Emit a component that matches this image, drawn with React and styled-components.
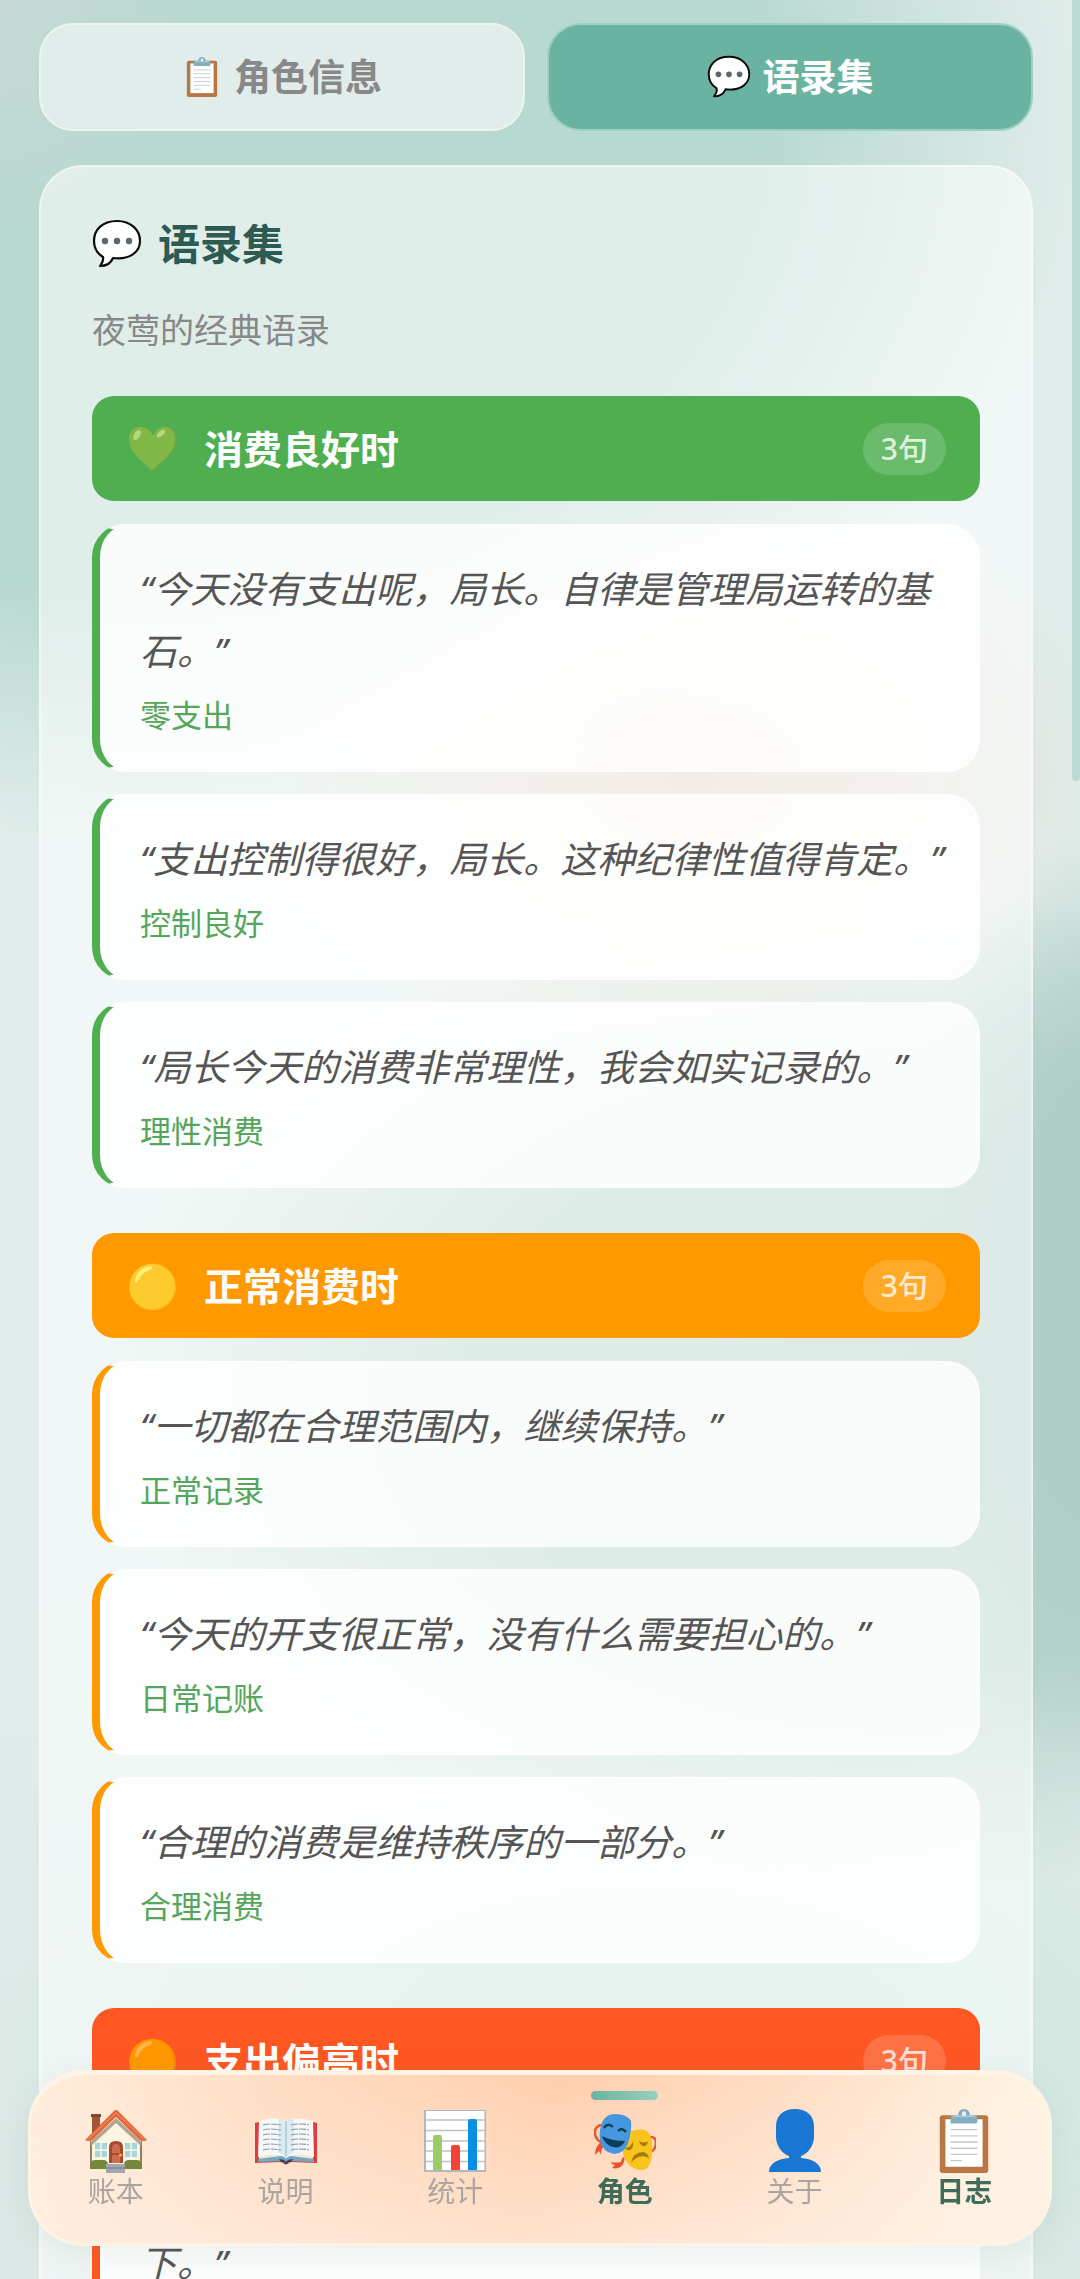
import React from 'react';
import styled, { createGlobalStyle } from 'styled-components';

const GlobalStyle = createGlobalStyle`
  * {
    box-sizing: border-box;
  }

  body {
    margin: 0;
    font-family: "Noto Sans", "Noto Sans CJK SC", sans-serif;
    text-spacing-trim: space-all;
    background-color: #e0edea;
  }
`;

const Page = styled.div`
  display: flex;
  height: 100vh;
  overflow: hidden;
  background:
    radial-gradient(ellipse 22% 21% at 104% 57%, #abccc5 0%, #b0cfc8 50%, rgba(176, 207, 200, 0) 100%),
    radial-gradient(ellipse 40% 13% at 64% 34%, #e6d6c8 0%, rgba(230, 214, 200, 0) 100%),
    radial-gradient(ellipse 18% 10% at 0% 0%, #c6dad5 0%, rgba(198, 218, 213, 0) 100%),
    radial-gradient(ellipse 86% 32% at 14% 5%, #b8d9d0 0%, #b8d9d0 66%, rgba(184, 217, 208, 0) 100%),
    radial-gradient(ellipse 74% 22% at 84% 61%, #b0d2c8 0%, #b5d4cb 55%, rgba(184, 214, 205, 0) 100%),
    radial-gradient(ellipse 60% 14% at 60% 90%, #c4e6d8 0%, rgba(196, 230, 216, 0) 100%),
    linear-gradient(180deg, #e0edea 0%, #e0edea 70%, #dbe8e5 100%);
`;

const Content = styled.main`
  flex: 1;
  padding: 23px 39px 0;
  overflow-y: auto;
  scrollbar-width: none;
`;

const ScrollTrack = styled.div`
  width: 8px;
`;

const ScrollThumb = styled.div`
  height: 781px;
  border-radius: 0 0 4px 4px;
  background-color: #bbdad2;
`;

const Tabs = styled.div`
  display: flex;
  gap: 22px;
  margin-bottom: 34px;
`;

const TabButton = styled.button`
  flex: 1;
  display: flex;
  align-items: center;
  justify-content: center;
  gap: 12px;
  height: 108px;
  border: 2px solid ${(props) => (props.$active ? '#9dcfc2' : '#eaf5f1')};
  border-radius: 34px;
  background-color: ${(props) => (props.$active ? '#6bb3a1' : '#e0edea')};
  color: ${(props) => (props.$active ? '#ffffff' : '#888888')};
  font-family: inherit;
  font-size: 37px;
  font-weight: 600;
  line-height: 48px;
`;

const Card = styled.section`
  padding: 49px 51px;
  border: 2px solid rgba(255, 255, 255, 0.4);
  border-radius: 44px;
  background-color: rgba(255, 255, 255, 0.56);
`;

const CardTitle = styled.h2`
  display: flex;
  align-items: center;
  gap: 16px;
  margin: 0 0 34px;
  color: #2d5a52;
  font-size: 42px;
  font-weight: 600;
  line-height: 56px;
`;

const CardSubtitle = styled.p`
  margin: 0 0 42px;
  color: #888888;
  font-size: 34px;
  line-height: 48px;
`;

const Group = styled.section`
  margin-bottom: 45px;
`;

const GroupHeader = styled.header`
  display: flex;
  align-items: center;
  height: 105px;
  margin-bottom: 23px;
  padding: 0 34px 0 36px;
  border-radius: 22px;
  background-color: ${(props) => props.$color};
  color: #ffffff;
`;

const GroupIcon = styled.span`
  display: flex;
  margin-right: 26px;
`;

const GroupTitle = styled.h3`
  flex: 1;
  margin: 0;
  font-size: 39px;
  font-weight: 600;
  line-height: 54px;
`;

const Count = styled.span`
  padding: 0 18px;
  border-radius: 26px;
  background-color: rgba(255, 255, 255, 0.16);
  color: rgba(255, 255, 255, 0.8);
  font-size: 30px;
  font-weight: 500;
  line-height: 52px;
`;

const QuoteCard = styled.blockquote`
  margin: 0 0 22px;
  padding: 32px 22px 31px 40px;
  border: 2px solid rgba(255, 255, 255, 0.3);
  border-left: 8px solid ${(props) => props.$color};
  border-radius: 33px;
  background-color: rgba(255, 255, 255, 0.82);
`;

const QuoteText = styled.p`
  margin: 0 0 9px;
  color: #555555;
  font-size: 37px;
  font-style: italic;
  line-height: 62px;
`;

const QuoteTag = styled.span`
  display: block;
  color: #55a65a;
  font-size: 31px;
  line-height: 48px;
`;

const BottomNav = styled.nav`
  position: fixed;
  right: 28px;
  bottom: 33px;
  left: 28px;
  display: flex;
  height: 176px;
  border: 3px solid #fff3e6;
  border-top-width: 5px;
  border-radius: 56px;
  background:
    linear-gradient(180deg, rgba(255, 240, 228, 0) 0%, rgba(255, 240, 228, 0.6) 100%),
    linear-gradient(105deg, #ffeedd 0%, #ffdcc3 24%, #ffceac 50%, #ffdcc3 70%, #fff1df 92%, #fff6e8 100%);
  background-clip: padding-box;
  background-color: #fff3e6;
  box-shadow: 0 8px 32px rgba(90, 120, 110, 0.1);
`;

const NavItem = styled.a`
  position: relative;
  flex: 1;
  display: flex;
  flex-direction: column;
  align-items: center;
  padding-top: 34px;
  color: ${(props) => (props.$strong ? '#3f6b5b' : '#aaa5a0')};
  font-size: 28px;
  font-weight: ${(props) => (props.$strong ? 600 : 400)};
  line-height: 36px;
  text-decoration: none;
`;

const ActiveMark = styled.span`
  position: absolute;
  top: 16px;
  width: 67px;
  height: 9px;
  border-radius: 5px;
  background: linear-gradient(90deg, #6bb3a1, #97d0bd);
`;

function ClipboardIcon({ size }) {
  return (
    <svg width={size} height={size} viewBox="0 0 62 62" aria-hidden="true">
      <rect x="7.500" y="6" width="47" height="56" rx="3" fill="#b87745" />
      <path d="M13 10h36v46H13z" fill="#fff" />
      <path d="M18 20h26M18 26h26M18 32h26M18 38h26M18 44h26M18 50h11" stroke="#c3c8cd" strokeWidth="1.300" />
      <path d="M18 14V9q0-3 3-3h4q1-6 6-6t6 6h4q3 0 3 3v3q0 2-2 2z" fill="#82aec0" />
      <path d="M20 6h22v2H20z" fill="#a7cbd8" />
      <circle cx="31" cy="4.500" r="2.200" fill="#f4ece2" />
    </svg>
  );
}

function SpeechIcon({ size }) {
  return (
    <svg width={size} height={size} viewBox="0 0 50 50" aria-hidden="true">
      <path
        d="M25 2C10 2 2 11 2 22c0 8 4 13 9 16 1 4-1 6-3 9 6 0 11-3 13-8 17 2 27-6 27-17C48 11 39 2 25 2z"
        fill="#fff"
        stroke="#0b0b0b"
        strokeWidth="2.200"
        strokeLinejoin="round"
      />
      <circle cx="13" cy="22" r="3.200" fill="#5b6670" />
      <circle cx="25" cy="22" r="3.200" fill="#5b6670" />
      <circle cx="37" cy="22" r="3.200" fill="#5b6670" />
    </svg>
  );
}

function HeartIcon() {
  return (
    <svg width="50" height="50" viewBox="0 0 50 50" aria-hidden="true">
      <path d="M25 48C21 41 1 32 1 15 1 7 6 3 12.500 3 19 3 23 7 25 12 27 7 31 3 37.500 3 44 3 49 7 49 15c0 17-20 26-24 33z" fill="#6aa63f" />
      <path d="M24 47C19 40 1 31 1 15 1 7 6 3 12.500 3 19 3 23 7 25 12 27 7 31 3 36.500 3 43 3 47 7 47 15c0 16-18 25-23 32z" fill="#80b747" />
      <ellipse cx="9" cy="11" rx="3" ry="5.500" transform="rotate(32 9 11)" fill="#b4d780" />
      <ellipse cx="33" cy="9.500" rx="2.500" ry="5" transform="rotate(48 33 9.500)" fill="#b4d780" />
    </svg>
  );
}

function DotIcon({ fill, edge, shine }) {
  return (
    <svg width="50" height="50" viewBox="0 0 50 50" aria-hidden="true">
      <circle cx="24.500" cy="26" r="23.500" fill={edge} />
      <circle cx="24" cy="25.500" r="22.500" fill={fill} />
      <path d="M7 20C8 12 14 6 22 5c3 0 2 3 0 4-6 2-9 5-12 11-1 2-3 2-3 0z" fill={shine} />
    </svg>
  );
}

function HouseIcon() {
  return (
    <svg width="62" height="64" viewBox="0 0 62 64" aria-hidden="true">
      <path d="M7 6h8v14l-8 8z" fill="#a15438" />
      <path d="M6 5h10v3H6z" fill="#8b432c" />
      <path d="M6 30L31 6l25 24v28H6z" fill="#fdf5e3" />
      <path d="M6 32v24M56 32v24" stroke="#6b5a3a" strokeWidth="1.500" />
      <path d="M6 32L31 9l25 23v5L31 14 6 37z" fill="#b7a48f" />
      <path d="M0 31L29 2q2-2 4 0l29 29q-3 2-7 0L31 8 7 31q-4 2-7 0z" fill="#e0653a" />
      <path d="M2 31L31 4l29 27" stroke="#f08152" strokeWidth="1.500" fill="none" />
      <path d="M10 34h12v14H10zM40 34h12v14H40z" fill="#a6d5d9" />
      <path d="M16 34v14M10 41h12M46 34v14M40 41h12" stroke="#fdf5e3" strokeWidth="1.500" />
      <path d="M24 54V38q0-6 7-6t7 6v16z" fill="#a9472f" />
      <path d="M27 54V39q0-4 4-4t4 4v15z" fill="#cf6c4e" />
      <path d="M27 45h8" stroke="#a9472f" strokeWidth="2" />
      <circle cx="35.500" cy="46" r="1.500" fill="#f5c243" />
      <path d="M5 60v-4q0-5 6-5h7q5 0 5 5v4zM39 60v-4q0-5 5-5h7q6 0 6 5v4z" fill="#74873a" />
      <path d="M21 55h19v9H21z" fill="#a3a6aa" />
      <path d="M21 59h19" stroke="#85898e" strokeWidth="1.500" />
    </svg>
  );
}

function BookIcon() {
  return (
    <svg width="62" height="64" viewBox="0 0 62 64" aria-hidden="true">
      <path d="M0 14l4-1v38l23-1q4 0 4 3 0-3 4-3l23 1V13l4 1v40l-25-1q-3 0-4 2h-4q-1-2-4-2L0 54z" fill="#dd3f3d" />
      <path d="M3 50l23-3q4 0 5 3 1-3 5-3l23 3v3l-24-1q-3 0-4 3-1-3-4-3L3 53z" fill="#6fa9c4" />
      <path d="M4 12q17-5 27 0v37q-8-6-28-1zM58 12q-17-5-27 0v37q8-6 28-1z" fill="#f6f9fa" />
      <path d="M31 12q-4-2-8-2v34q5 0 8 5 3-5 8-5V10q-4 0-8 2z" fill="#dcebf1" />
      <path d="M31 12v36" stroke="#a8c8d6" strokeWidth="1.500" />
      <path
        d="M8 16q7-2 18 0M8 21q7-2 18 0M8 26q7-2 18 0M8 31q7-2 18 0M8 36q7-2 18 0M8 41q7-2 18 0M36 16q10-2 18 0M36 21q10-2 18 0M36 26q10-2 18 0M36 31q10-2 18 0M36 36q10-2 18 0M36 41q10-2 18 0"
        stroke="#8c979e"
        strokeWidth="1.100"
        strokeDasharray="7 1"
        fill="none"
      />
      <path d="M24 50q5 0 7 3 2-3 7-3l-2 3-3 0-2 3-2-3-3 0z" fill="#33444e" />
    </svg>
  );
}

function ChartIcon() {
  return (
    <svg width="62" height="64" viewBox="0 0 62 64" aria-hidden="true">
      <rect x="0" y="1" width="62" height="62" fill="#b1b7bd" />
      <rect x="2" y="2" width="58.500" height="59" fill="#fff" />
      <path d="M2 11h59M2 21.500h59M2 32h59M2 42h59M2 52.500h59" stroke="#bcc1c6" strokeWidth="1.300" />
      <path d="M9 61V28q0-2 2-2h5q2 0 2 2v33z" fill="#9ccc65" />
      <path d="M27 61V38q0-2 2-2h5q2 0 2 2v23z" fill="#f44336" />
      <path d="M44 61V12q0-2 2-2h5q2 0 2 2v49z" fill="#0a8fe8" />
    </svg>
  );
}

function MasksIcon() {
  return (
    <svg width="62" height="64" viewBox="0 0 62 64" aria-hidden="true">
      <path d="M8 16q-8 1-7 9 1 6 6 8" fill="none" stroke="#e9532e" strokeWidth="2.500" />
      <path d="M7 33q-6 4-6 13l4-4 2 4q0-7 4-10z" fill="#e9532e" />
      <path d="M54 28q8-1 8 6 0 6-5 9" fill="none" stroke="#e9532e" strokeWidth="2.500" />
      <path d="M31 47q-4 2-4 6-5 1-10 0 1 3 4 3l-3 3q9 2 12-6z" fill="#e9532e" />
      <path d="M29 28q4-5 12-7 12-2 15 5 3 7 2 18-1 17-10 17-12 0-18-13-3-11-1-20z" fill="#f9c31d" />
      <path d="M7 17Q10 5 21 5q12 0 16 7 1 10-3 22-4 11-14 11Q8 43 6 31q-1-8 1-14z" fill="#4597e0" />
      <path d="M10 19q4-6 9-1M24 22q4-4 8 1" fill="none" stroke="#123e59" strokeWidth="2.400" />
      <path d="M8 27q9 5 23 5-4 8-12 6-8-2-11-11z" fill="#0d3e59" />
      <path d="M31 39q6 0 8-7 1 7-3 9-3 1-5-2zM45 32q5 3 9 0-1 6-5 5-3-1-4-5z" fill="#a77b0b" />
      <path d="M37 54q2-11 12-11 5 1 6 6-10-5-18 5z" fill="#a77b0b" />
    </svg>
  );
}

function PersonIcon() {
  return (
    <svg width="62" height="64" viewBox="0 0 62 64" aria-hidden="true">
      <path
        d="M31 0c12 0 19 7 19 17v11c0 8-6 17-13 19v2c11 1 20 5 20 14H5c0-9 9-13 20-14v-2c-7-2-13-11-13-19V17C12 7 19 0 31 0z"
        fill="#1976d2"
      />
    </svg>
  );
}

const groups = [
  {
    title: '消费良好时',
    color: '#4faf50',
    icon: <HeartIcon />,
    quotes: [
      { text: '今天没有支出呢，局长。自律是管理局运转的基石。', tag: '零支出' },
      { text: '支出控制得很好，局长。这种纪律性值得肯定。', tag: '控制良好' },
      { text: '局长今天的消费非常理性，我会如实记录的。', tag: '理性消费' },
    ],
  },
  {
    title: '正常消费时',
    color: '#ff9900',
    icon: <DotIcon fill="#fecb2f" edge="#fdbc1c" shine="#fff176" />,
    quotes: [
      { text: '一切都在合理范围内，继续保持。', tag: '正常记录' },
      { text: '今天的开支很正常，没有什么需要担心的。', tag: '日常记账' },
      { text: '合理的消费是维持秩序的一部分。', tag: '合理消费' },
    ],
  },
  {
    title: '支出偏高时',
    color: '#ff5722',
    icon: <DotIcon fill="#ff9800" edge="#f98307" shine="#ffb74d" />,
    quotes: [
      { text: '局长，今天的支出有些偏高，建议您稍微控制一下。', tag: '支出偏高' },
    ],
  },
];

const navItems = [
  { label: '账本', icon: <HouseIcon /> },
  { label: '说明', icon: <BookIcon /> },
  { label: '统计', icon: <ChartIcon /> },
  { label: '角色', icon: <MasksIcon />, active: true, strong: true },
  { label: '关于', icon: <PersonIcon /> },
  { label: '日志', icon: <ClipboardIcon size={64} />, strong: true },
];

function QuoteGroup({ group }) {
  return (
    <Group>
      <GroupHeader $color={group.color}>
        <GroupIcon>{group.icon}</GroupIcon>
        <GroupTitle>{group.title}</GroupTitle>
        <Count>3句</Count>
      </GroupHeader>
      {group.quotes.map((quote) => (
        <QuoteCard key={quote.tag} $color={group.color}>
          <QuoteText>{`“${quote.text}”`}</QuoteText>
          <QuoteTag>{quote.tag}</QuoteTag>
        </QuoteCard>
      ))}
    </Group>
  );
}

function App() {
  return (
    <>
      <GlobalStyle />
      <Page>
        <Content>
          <Tabs>
            <TabButton type="button">
              <ClipboardIcon size={40} />
              角色信息
            </TabButton>
            <TabButton type="button" $active>
              <SpeechIcon size={44} />
              语录集
            </TabButton>
          </Tabs>

          <Card>
            <CardTitle>
              <SpeechIcon size={50} />
              语录集
            </CardTitle>
            <CardSubtitle>夜莺的经典语录</CardSubtitle>
            {groups.map((group) => (
              <QuoteGroup key={group.title} group={group} />
            ))}
          </Card>
        </Content>
        <ScrollTrack>
          <ScrollThumb />
        </ScrollTrack>
      </Page>

      <BottomNav>
        {navItems.map((item) => (
          <NavItem key={item.label} href="#" $strong={item.strong}>
            {item.active && <ActiveMark />}
            {item.icon}
            {item.label}
          </NavItem>
        ))}
      </BottomNav>
    </>
  );
}

export default App;
